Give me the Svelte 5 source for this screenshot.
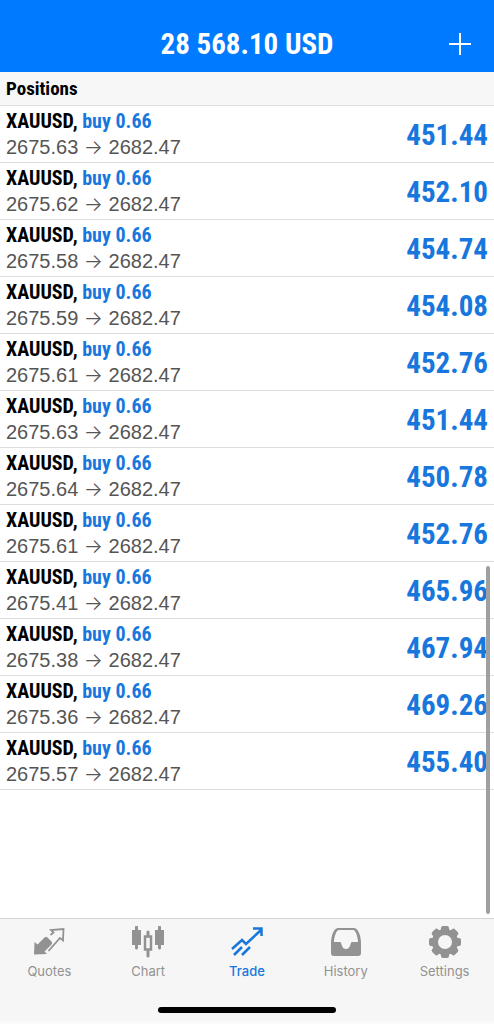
<script lang="ts">
  interface Position {
    symbol: string;
    side: "buy" | "sell";
    volume: string;
    open: string;
    current: string;
    profit: string;
  }

  const rows = [
    ["2675.63", "451.44"],
    ["2675.62", "452.10"],
    ["2675.58", "454.74"],
    ["2675.59", "454.08"],
    ["2675.61", "452.76"],
    ["2675.63", "451.44"],
    ["2675.64", "450.78"],
    ["2675.61", "452.76"],
    ["2675.41", "465.96"],
    ["2675.38", "467.94"],
    ["2675.36", "469.26"],
    ["2675.57", "455.40"],
  ];

  const positions: Position[] = rows.map(([open, profit]) => ({
    symbol: "XAUUSD",
    side: "buy",
    volume: "0.66",
    open,
    current: "2682.47",
    profit,
  }));

  const tabs = ["Quotes", "Chart", "Trade", "History", "Settings"];
  const teeth = [0, 45, 90, 135, 180, 225, 270, 315];

  let active = $state("Trade");
</script>

<div class="screen">
  <header class="topbar">
    <h1>28 568.10 USD</h1>
    <button class="add" type="button" aria-label="New order">
      <svg viewBox="0 0 24 24" width="24" height="24">
        <path d="M12 1v22M1 12h22" stroke="currentColor" stroke-width="2" />
      </svg>
    </button>
  </header>

  <main>
    <h2>Positions</h2>
    <ul class="positions">
      {#each positions as position}
        <li>
          <div class="info">
            <div class="order">
              {position.symbol}, <span>{position.side} {position.volume}</span>
            </div>
            <div class="prices">
              {position.open} <span class="arrow">→</span> {position.current}
            </div>
          </div>
          <div class="profit">{position.profit}</div>
        </li>
      {/each}
    </ul>
    <div class="scroll-thumb"></div>
  </main>

  <footer>
    <nav>
      {#each tabs as tab}
        <button
          type="button"
          class="tab"
          class:active={active === tab}
          onclick={() => (active = tab)}
        >
          <svg viewBox="0 0 32 32" width="32" height="32" fill="none" stroke="currentColor">
            {#if tab === "Quotes"}
              <path
                d="M1 28.500L1.500 16l3 2.500 7-7q1.500-1.500 3 0l4 4q1.500 1.500 0 3l-7 7 2.500 2.500z"
                fill="currentColor"
                stroke="none"
              />
              <path d="M17.500 9l3-2.500-2.500-2.500 12.500-1-.500 11.500-3-2.500-11.500 13" stroke-width="1.800" />
            {:else if tab === "Chart"}
              <path d="M4.500 1v21M27.500 1v21M16 6v4M16 25v5" stroke-width="3" stroke-linecap="round" />
              <path d="M0 4h9v15H0zM23 4h9v15h-9z" fill="currentColor" stroke="none" />
              <path d="M13 10.500h6v13h-6z" stroke-width="2.5" />
            {:else if tab === "Trade"}
              <path d="M1 23l10-9 4 4L30 4M22 2.500h8.500V10M3 29l8-8M11 29l8-8" stroke-width="2.500" />
            {:else if tab === "History"}
              <path
                d="M8 2h16c5 0 7 10 7 15v10q0 3-3 3H4q-3 0-3-3V17C1 12 3 2 8 2zM9 4C6 4 4 12 4 16h6c2 0 1 7 6 7s4-7 6-7h6c0-4-2-12-5-12z"
                fill="currentColor"
                fill-rule="evenodd"
                stroke="none"
              />
            {:else}
              <circle cx="16" cy="16" r="10" stroke-width="6" />
              {#each teeth as angle}
                <path
                  d="M10 5q2 0 2-3 0-2 2-2h4q2 0 2 2 0 3 2 3z"
                  fill="currentColor"
                  stroke="none"
                  transform="rotate({angle} 16 16)"
                />
              {/each}
            {/if}
          </svg>
          <span>{tab}</span>
        </button>
      {/each}
    </nav>
    <div class="home-indicator"></div>
  </footer>
</div>

<style>
  :global(body) {
    margin: 0;
    background: #fff;
  }
  .screen {
    display: flex;
    flex-direction: column;
    min-height: 100vh;
    font-family: "Liberation Sans", Arial, sans-serif;
  }
  h1,
  h2,
  ul {
    margin: 0;
    padding: 0;
  }
  button {
    border: 0;
    padding: 0;
    background: none;
    cursor: pointer;
  }
  svg {
    display: block;
  }
  h1,
  h2,
  .order,
  .profit {
    font-family: "Roboto Condensed", "Arial Narrow", sans-serif;
    font-weight: 700;
  }
  .topbar {
    display: grid;
    grid-template-columns: 1fr auto 1fr;
    align-items: center;
    padding: 24px 22px 8px;
    background: #007aff;
    color: #fff;
  }
  h1 {
    grid-column: 2;
    font-size: 29px;
    line-height: 40px;
  }
  .add {
    justify-self: end;
    color: #fff;
  }
  main {
    position: relative;
    flex: 1;
  }
  h2 {
    padding: 5px 6px 4px;
    border-bottom: 1px solid #dedede;
    background: #f7f7f7;
    font-size: 19px;
    line-height: 24px;
  }
  .positions {
    list-style: none;
  }
  li {
    display: flex;
    align-items: center;
    justify-content: space-between;
    padding: 2px 6px;
    border-bottom: 1px solid #dedede;
  }
  .order {
    font-size: 20px;
    line-height: 26px;
    color: #000;
  }
  .order span,
  .profit {
    color: #1877dc;
  }
  .prices {
    font-size: 20px;
    line-height: 26px;
    color: #555;
  }
  .arrow {
    font-family: Inter, sans-serif;
    font-size: 20px;
    font-weight: 300;
    line-height: 20px;
  }
  .profit {
    padding-top: 2px;
    font-size: 29px;
    line-height: 40px;
  }
  .scroll-thumb {
    position: absolute;
    right: 4px;
    bottom: 4px;
    width: 4px;
    height: 348px;
    border-radius: 2px;
    background: #a0a0a0;
  }
  footer {
    padding: 7px 0 8px;
    border-top: 1px solid #d4d4d4;
    border-bottom: 3px solid #fafafa;
    background: #f6f6f6;
  }
  nav {
    display: grid;
    grid-template-columns: repeat(5, 1fr);
  }
  .tab {
    display: flex;
    flex-direction: column;
    align-items: center;
    gap: 4px;
    color: #929292;
    font-family: Inter, Roboto, sans-serif;
    font-size: 13px;
    font-weight: 400;
    line-height: 18px;
  }
  .tab.active {
    color: #1877dc;
    font-weight: 500;
  }
  .home-indicator {
    width: 36%;
    height: 6px;
    margin: 27px auto 0;
    border-radius: 3px;
    background: #000;
  }
</style>
